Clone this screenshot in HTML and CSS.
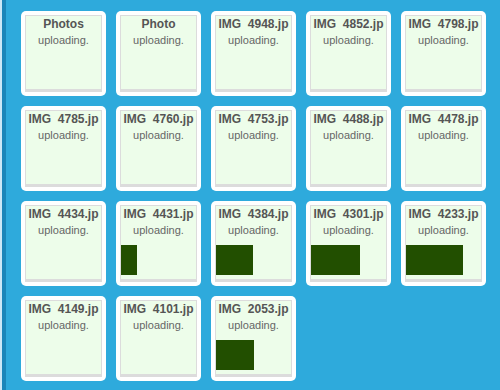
FILE: index.html
```html
<!DOCTYPE html>
<html lang="en">

<head>
    <meta charset="UTF-8">
    <meta name="viewport" content="width=device-width, initial-scale=1.0">
    <title>uploads</title>
    <link rel="stylesheet" href="styles.css">
</head>

<body>
<div class="frame">
    <div class="queue">
        <div class="thumb"><div class="box"><div class="name">Photos</div><div class="state">uploading.</div></div></div>
        <div class="thumb"><div class="box"><div class="name">Photo</div><div class="state">uploading.</div></div></div>
        <div class="thumb"><div class="box"><div class="name">IMG&nbsp; 4948.jp</div><div class="state">uploading.</div></div></div>
        <div class="thumb"><div class="box"><div class="name">IMG&nbsp; 4852.jp</div><div class="state">uploading.</div></div></div>
        <div class="thumb"><div class="box"><div class="name">IMG&nbsp; 4798.jp</div><div class="state">uploading.</div></div></div>

        <div class="thumb"><div class="box"><div class="name">IMG&nbsp; 4785.jp</div><div class="state">uploading.</div></div></div>
        <div class="thumb"><div class="box"><div class="name">IMG&nbsp; 4760.jp</div><div class="state">uploading.</div></div></div>
        <div class="thumb"><div class="box"><div class="name">IMG&nbsp; 4753.jp</div><div class="state">uploading.</div></div></div>
        <div class="thumb"><div class="box"><div class="name">IMG&nbsp; 4488.jp</div><div class="state">uploading.</div></div></div>
        <div class="thumb"><div class="box"><div class="name">IMG&nbsp; 4478.jp</div><div class="state">uploading.</div></div></div>

        <div class="thumb"><div class="box"><div class="name">IMG&nbsp; 4434.jp</div><div class="state">uploading.</div></div></div>
        <div class="thumb"><div class="box"><div class="name">IMG&nbsp; 4431.jp</div><div class="state">uploading.</div><div class="bar" style="width: 16px"></div></div></div>
        <div class="thumb"><div class="box"><div class="name">IMG&nbsp; 4384.jp</div><div class="state">uploading.</div><div class="bar" style="width: 37px"></div></div></div>
        <div class="thumb"><div class="box"><div class="name">IMG&nbsp; 4301.jp</div><div class="state">uploading.</div><div class="bar" style="width: 49px"></div></div></div>
        <div class="thumb"><div class="box"><div class="name">IMG&nbsp; 4233.jp</div><div class="state">uploading.</div><div class="bar" style="width: 57px"></div></div></div>

        <div class="thumb"><div class="box"><div class="name">IMG&nbsp; 4149.jp</div><div class="state">uploading.</div></div></div>
        <div class="thumb"><div class="box"><div class="name">IMG&nbsp; 4101.jp</div><div class="state">uploading.</div></div></div>
        <div class="thumb"><div class="box"><div class="name">IMG&nbsp; 2053.jp</div><div class="state">uploading.</div><div class="bar" style="width: 38px"></div></div></div>
    </div>
</div>
</body>

</html>
```

FILE: styles.css
```css
html, body {
    height: 100%;
}

body {
    box-sizing: border-box;
    margin: 0;
    padding: 0;
    background: #2eaadc;
    font-family: "Liberation Sans", Arial, sans-serif
}

.frame {
    box-sizing: border-box;
    height: 100%;
    border-left: 2px solid #cde8f6
}

.queue {
    box-sizing: border-box;
    height: 100%;
    border-left: 4px solid #1b86b9;
    padding: 11px 0 0 15px;
    display: grid;
    grid-template-columns: repeat(5, 85px);
    grid-auto-rows: 85px;
    gap: 10px;
    align-content: start
}

.thumb {
    box-sizing: border-box;
    background: #fff;
    border-radius: 5px;
    padding: 4px
}

.box {
    box-sizing: border-box;
    height: 100%;
    background: #edfdea;
    border: 1px solid #dcdcdc;
    border-bottom-width: 3px;
    padding-top: 1px;
    overflow: hidden
}

.name {
    padding: 0 2px;
    font-size: 12px;
    font-weight: 700;
    line-height: 15px;
    color: #555;
    text-align: center;
    white-space: nowrap;
    overflow: hidden
}

.state {
    margin-top: 1px;
    font-size: 11px;
    line-height: 15px;
    color: #666;
    text-align: center
}

.bar {
    height: 30px;
    margin-top: 7px;
    background: #224f00
}
```
